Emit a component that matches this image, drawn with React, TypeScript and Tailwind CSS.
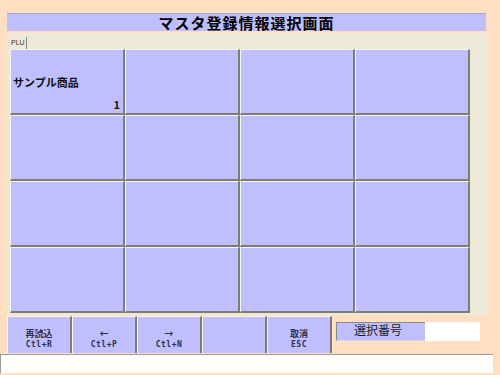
const cells = Array.from({ length: 16 }, (_, i) => (i === 0 ? { name: "サンプル商品", no: "1" } : null));

const buttons = [
  { top: "再読込", bottom: "Ctl+R" },
  { top: "←", bottom: "Ctl+P" },
  { top: "→", bottom: "Ctl+N" },
  { top: "", bottom: "" },
  { top: "取消", bottom: "ESC" },
];

export default function App() {
  return (
    <div
      className="relative w-[500px] h-[375px] overflow-hidden bg-[#FEDFC1]"
      style={{ fontFamily: '"Noto Sans CJK JP", "Liberation Sans", sans-serif' }}
    >
      <div className="pt-[13px] pl-[7px]">
        {/* title */}
        <div className="w-[479px] h-[18px] bg-[#BFBFFF] border-t border-[#a8a8d8] flex items-center justify-center text-[15px] font-bold leading-none tracking-[1px] text-black">
          マスタ登録情報選択画面
        </div>

        {/* tab panel */}
        <div className="mt-[2px] w-[480px] h-[282px] bg-[#ECE9D8] flex flex-col">
          <div className="h-[16px] pl-[3px] flex items-end">
            <div className="h-[12px] px-[1px] border-r border-[#888] text-[7px] leading-[12px] text-[#333]" style={{ fontFamily: '"Liberation Sans", sans-serif' }}>
              PLU
            </div>
          </div>
          <div className="ml-[3px] w-[460px] grid grid-cols-4">
            {cells.map((c, i) => (
              <div
                key={i}
                className="h-[66px] bg-[#BFBFFF] border-t border-l border-[#F6F4EC] border-r-2 border-b-2 border-r-[#7d7d74] border-b-[#7d7d74] flex flex-col pl-[2px] pr-[3px] pt-[27px]"
              >
                {c && (
                  <>
                    <div className="text-[11px] font-bold leading-none text-[#111]">{c.name}</div>
                    <div className="mt-[11px] self-end text-[11px] font-bold leading-none text-[#111]">{c.no}</div>
                  </>
                )}
              </div>
            ))}
          </div>
        </div>

        {/* function keys */}
        <div className="mt-[1px] h-[37px] flex items-start">
          {buttons.map((b, i) => (
            <div
              key={i}
              className="w-[65px] h-[37px] bg-[#BFBFFF] border-t border-l border-[#F6F4EC] border-r-2 border-r-[#7d7d74] flex flex-col items-center pt-[11px] text-[9px] font-bold leading-[11px] text-[#2e2e4e]"
            >
              <div>{b.top}</div>
              <div style={{ fontFamily: '"DejaVu Sans Mono", monospace' }} className="text-[8px] tracking-[0.5px]">{b.bottom}</div>
            </div>
          ))}
          <div className="ml-[4px] mt-[6px] flex h-[19px]">
            <div className="w-[89px] h-[19px] bg-[#BFBFFF] border-t border-l border-[#8a8a8a] border-b border-b-[#d8d8e8] text-[12px] leading-[14px] text-[#222] pl-[17px]">
              選択番号
            </div>
            <div className="w-[55px] h-[19px] bg-white" />
          </div>
        </div>
      </div>

      {/* status bar */}
      <div className="mt-[1px] w-[493px] h-[19px] bg-[#FFFEFB] border-t border-l border-[#9a9a9a]" />
    </div>
  );
}
